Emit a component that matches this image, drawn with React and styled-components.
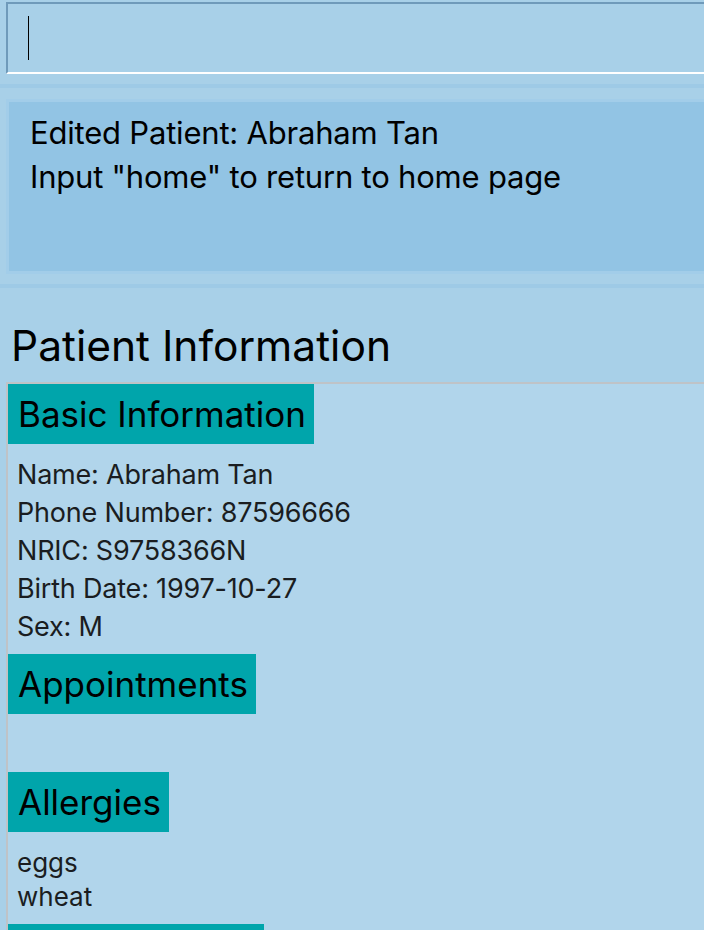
import React from "react";
import styled, { createGlobalStyle } from "styled-components";

const Global = createGlobalStyle`
  html, body { margin: 0; padding: 0; background: #a8d0e8; overflow: hidden; }
  body { font-family: Inter, "Noto Sans", "Liberation Sans", sans-serif; color: #000; }
`;

const Page = styled.div`
  width: 760px;
  height: 930px;
  overflow: hidden;
  background: #a8d0e8;
  display: flex;
  flex-direction: column;
`;

const CommandBox = styled.div`
  margin: 2px 0 0 6px;
  background: #a8d0e8;
  border-top: 2px solid #6f9aba;
  border-left: 2px solid #6f9aba;
  border-bottom: 2px solid #ffffff;
  display: flex;
  align-items: flex-start;
  padding: 12px 0 0 20px;
  box-sizing: content-box;
  height: 56px;
  flex-shrink: 0;
`;

const Caret = styled.div`
  width: 1px;
  height: 44px;
  background: #000;
`;

const Divider = styled.div`
  height: 4px;
  flex-shrink: 0;
  margin-top: ${(p) => p.$top}px;
  background: #9ecae6;
`;

const ResultBox = styled.div`
  margin: 11px 0 0 6px;
  border: 3px solid #a2cde9;
  border-right: none;
  background: #92c4e4;
  padding: 9px 0 0 21px;
  box-sizing: border-box;
  height: 175px;
  flex-shrink: 0;
`;

const ResultLine = styled.div`
  font-size: 31px;
  line-height: 44px;
  letter-spacing: -0.2px;
  color: #000;
`;

const Title = styled.h1`
  margin: 0;
  height: 94px;
  flex-shrink: 0;
  box-sizing: border-box;
  padding: 30px 0 0 11px;
  font-size: 42.5px;
  font-weight: 400;
  line-height: 56px;
  color: #000;
`;

const Panel = styled.div`
  margin-left: 6px;
  flex: 1;
  background: #b1d5eb;
  border-top: 2px solid #bfc3c7;
  border-left: 2px solid #bfc3c7;
  display: flex;
  flex-direction: column;
  align-items: flex-start;
`;

const SectionHeader = styled.div`
  height: 60px;
  flex-shrink: 0;
  box-sizing: border-box;
  background: #00a5ab;
  padding: 0 8px 0 10px;
  font-size: 35px;
  line-height: 60px;
  color: #000;
  white-space: nowrap;
`;

const Fields = styled.div`
  padding: 12px 0 8px 9px;
  display: flex;
  flex-direction: column;
`;

const Field = styled.div`
  font-size: 27px;
  line-height: 38px;
  color: #1a1d21;
  letter-spacing: -0.2px;
`;

const Spacer = styled.div`
  height: ${(p) => p.$h}px;
  flex-shrink: 0;
`;

const ListText = styled.div`
  padding: 14px 0 10px 9px;
  font-size: 26px;
  line-height: 34px;
  color: #1a1d21;
`;

export default function App() {
  return (
    <Page>
      <Global />
      <CommandBox>
        <Caret />
      </CommandBox>
      <Divider $top={10} />
      <ResultBox>
        <ResultLine>Edited Patient: Abraham Tan</ResultLine>
        <ResultLine>Input "home" to return to home page</ResultLine>
      </ResultBox>
      <Divider $top={10} />
      <Title>Patient Information</Title>
      <Panel>
        <SectionHeader>Basic Information</SectionHeader>
        <Fields>
          <Field>Name: Abraham Tan</Field>
          <Field>Phone Number: 87596666</Field>
          <Field>NRIC: S9758366N</Field>
          <Field>Birth Date: 1997-10-27</Field>
          <Field>Sex: M</Field>
        </Fields>
        <SectionHeader>Appointments</SectionHeader>
        <Spacer $h={58} />
        <SectionHeader>Allergies</SectionHeader>
        <ListText>
          eggs
          <br />
          wheat
        </ListText>
        <SectionHeader>Medical Notes</SectionHeader>
      </Panel>
    </Page>
  );
}
